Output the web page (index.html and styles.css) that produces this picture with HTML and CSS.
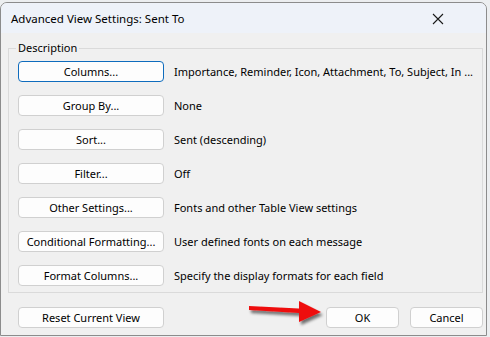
FILE: index.html
```html
<!DOCTYPE html>
<html>
<head>
<meta charset="utf-8">
<link rel="stylesheet" href="styles.css">
</head>
<body>
<div class="window">
  <div class="titlebar">
    <span class="title">Advanced View Settings: Sent To</span>
    <svg class="close" width="12" height="12" viewBox="0 0 12 12"><path d="M1 1 L11 11 M11 1 L1 11" stroke="#1a1a1a" stroke-width="1.1" fill="none"/></svg>
  </div>
  <div class="content">
    <fieldset class="group">
      <legend>Description</legend>
      <div class="rows">
        <div class="row"><button class="btn btn-focus">Columns...</button><span class="desc">Importance, Reminder, Icon, Attachment, To, Subject, In ...</span></div>
        <div class="row"><button class="btn">Group By...</button><span class="desc">None</span></div>
        <div class="row"><button class="btn">Sort...</button><span class="desc">Sent (descending)</span></div>
        <div class="row"><button class="btn">Filter...</button><span class="desc">Off</span></div>
        <div class="row"><button class="btn">Other Settings...</button><span class="desc">Fonts and other Table View settings</span></div>
        <div class="row"><button class="btn">Conditional Formatting...</button><span class="desc">User defined fonts on each message</span></div>
        <div class="row"><button class="btn">Format Columns...</button><span class="desc">Specify the display formats for each field</span></div>
      </div>
    </fieldset>
    <div class="footer">
      <button class="btn">Reset Current View</button>
      <div class="actions">
        <button class="btn btn-small">OK</button>
        <button class="btn btn-small">Cancel</button>
      </div>
    </div>
  </div>
</div>
<svg class="arrow" width="90" height="30" viewBox="0 0 90 30">
  <defs>
    <filter id="sh" x="-20%" y="-50%" width="140%" height="200%">
      <feGaussianBlur in="SourceAlpha" stdDeviation="1.6"/>
      <feOffset dx="2" dy="3" result="b"/>
      <feComponentTransfer><feFuncA type="linear" slope="0.55"/></feComponentTransfer>
      <feMerge><feMergeNode/><feMergeNode in="SourceGraphic"/></feMerge>
    </filter>
  </defs>
  <g filter="url(#sh)">
    <polygon points="2,8 52,10.5 52,3 74,14 52,24 52,15 2,12" fill="#ee1111"/>
  </g>
</svg>
</body>
</html>
```
FILE: styles.css
```css
html, body {
  margin: 0;
  padding: 0;
}
body {
  width: 490px;
  height: 337px;
  background: #eceef0;
  position: relative;
  overflow: hidden;
  font-family: "Noto Sans", "Open Sans", sans-serif;
  font-size: 11px;
  color: #000;
}
.window {
  box-sizing: border-box;
  margin-top: 2px;
  width: 487px;
  height: 334px;
  border: 1px solid #8c8c8c;
  border-radius: 7px 7px 0 0;
  background: #f0f0f0;
  overflow: hidden;
  display: flex;
  flex-direction: column;
}
.titlebar {
  height: 30px;
  flex: none;
  background: #eef2f9;
  display: flex;
  align-items: center;
  padding-left: 10px;
  padding-right: 42px;
  justify-content: space-between;
}
.title {
  font-size: 11.5px;
  color: #000;
  margin-top: 1px;
}
.close {
  display: block;
  margin-top: 1px;
}
.content {
  flex: 1;
  padding: 7px 3px 0 7px;
  display: flex;
  flex-direction: column;
}
.group {
  margin: 0;
  padding: 0 0 6px 0;
  border: 1px solid #dadada;
  min-width: 0;
}
.group legend {
  margin-left: 7px;
  padding: 0 2px;
  font-size: 11px;
  line-height: 16px;
}
.rows {
  display: flex;
  flex-direction: column;
  gap: 13px;
  padding: 5px 0 0 9px;
}
.row {
  display: flex;
  align-items: center;
  gap: 10px;
}
.btn {
  box-sizing: border-box;
  width: 146px;
  height: 21px;
  padding: 0;
  border: 1px solid #d0d0d0;
  border-radius: 4px;
  background: #fdfdfd;
  font-family: "Noto Sans", "Open Sans", sans-serif;
  font-size: 11px;
  color: #000;
  line-height: 19px;
  flex: none;
}
.btn-focus {
  border-color: #0f6cbd;
}
.btn-small {
  width: 73px;
}
.desc {
  white-space: nowrap;
  line-height: 16px;
}
.footer {
  display: flex;
  justify-content: space-between;
  padding: 14px 0 0 10px;
}
.actions {
  display: flex;
  gap: 11px;
}
.arrow {
  position: absolute;
  left: 247px;
  top: 298px;
}
```
